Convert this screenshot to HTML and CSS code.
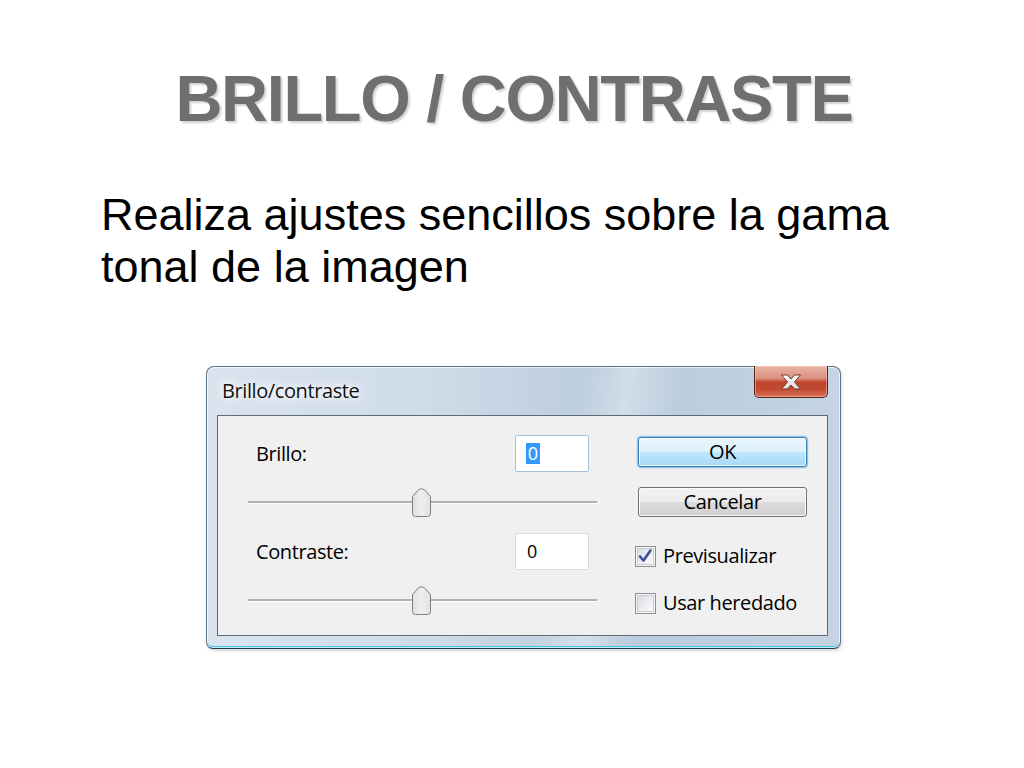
FILE: index.html
```html
<!DOCTYPE html>
<html lang="es">
<head>
<meta charset="utf-8">
<title>Brillo / Contraste</title>
<link rel="stylesheet" href="styles.css">
</head>
<body>
<main class="slide">
  <h1 class="slide-title">BRILLO / CONTRASTE</h1>
  <p class="slide-text">Realiza ajustes sencillos sobre la gama tonal de la imagen</p>
  <section class="window">
    <header class="titlebar">
      <span class="window-title">Brillo/contraste</span>
      <span class="close-btn">
        <svg width="22" height="16" viewBox="0 0 22 16">
          <defs>
            <linearGradient id="xg" x1="0" y1="0" x2="0" y2="1">
              <stop offset="0" stop-color="#ffffff"/>
              <stop offset="1" stop-color="#d9d9d9"/>
            </linearGradient>
          </defs>
          <path d="M1.5,1 H7.5 L11,5 L14.5,1 H20.5 L14.5,8 L20.5,15 H14.5 L11,11 L7.5,15 H1.5 L7.5,8 Z" fill="url(#xg)" stroke="#7a3426" stroke-width="1"/>
        </svg>
      </span>
    </header>
    <div class="client">
      <div class="controls">
        <div class="field-row">
          <span class="label">Brillo:</span>
          <span class="input focused"><span class="sel">0</span></span>
        </div>
        <div class="slider">
          <svg class="thumb" width="19" height="29" viewBox="0 0 19 29">
            <defs>
              <linearGradient id="tg" x1="0" y1="0" x2="1" y2="0">
                <stop offset="0" stop-color="#e0e0e0"/>
                <stop offset="0.5" stop-color="#efefef"/>
                <stop offset="1" stop-color="#e2e2e2"/>
              </linearGradient>
            </defs>
            <path d="M0.5,8.5 L6.5,1.8 Q9.5,-0.6 12.5,1.8 L18.5,8.5 V25.5 Q18.5,28.5 15.5,28.5 H3.5 Q0.5,28.5 0.5,25.5 Z" fill="url(#tg)" stroke="#7e7e7e"/>
          </svg>
        </div>
        <div class="field-row">
          <span class="label">Contraste:</span>
          <span class="input"><span class="val">0</span></span>
        </div>
        <div class="slider">
          <svg class="thumb" width="19" height="29" viewBox="0 0 19 29">
            <path d="M0.5,8.5 L6.5,1.8 Q9.5,-0.6 12.5,1.8 L18.5,8.5 V25.5 Q18.5,28.5 15.5,28.5 H3.5 Q0.5,28.5 0.5,25.5 Z" fill="url(#tg)" stroke="#7e7e7e"/>
          </svg>
        </div>
      </div>
      <div class="actions">
        <span class="btn btn-default">OK</span>
        <span class="btn">Cancelar</span>
        <span class="check first">
          <span class="box">
            <svg width="19" height="19" viewBox="0 0 19 19">
              <path d="M4,9.5 L7.5,13.5 L14.5,3.5" fill="none" stroke="#3d4f9f" stroke-width="2.6" stroke-linecap="round" stroke-linejoin="round"/>
            </svg>
          </span>
          <span class="check-label">Previsualizar</span>
        </span>
        <span class="check">
          <span class="box"></span>
          <span class="check-label">Usar heredado</span>
        </span>
      </div>
    </div>
  </section>
</main>
</body>
</html>
```

FILE: styles.css
```css
html, body {
  margin: 0;
  padding: 0;
  background: #ffffff;
}

.slide {
  width: 1024px;
  height: 768px;
  overflow: hidden;
  display: flex;
  flex-direction: column;
}

.slide-title {
  margin: 67px 0 0 0;
  padding-left: 4px;
  font-family: "Liberation Sans", Arial, sans-serif;
  font-weight: bold;
  font-size: 65px;
  line-height: 64px;
  letter-spacing: -1.3px;
  color: #6f6f6f;
  text-align: center;
  text-shadow: 2px 2px 2px rgba(0, 0, 0, 0.18);
}

.slide-text {
  margin: 58px 0 0 101px;
  max-width: 850px;
  font-family: "Liberation Sans", Arial, sans-serif;
  font-size: 45px;
  line-height: 52px;
  color: #000000;
}

/* ---------- window ---------- */
.window {
  margin: 73px 0 0 206px;
  width: 635px;
  height: 283px;
  box-sizing: border-box;
  border: 1px solid #5e7385;
  border-bottom-color: #22394a;
  border-radius: 8px 8px 7px 7px;
  padding: 0 12px 0 10px;
  display: flex;
  flex-direction: column;
  background:
    linear-gradient(100deg, rgba(255,255,255,0) 55%, rgba(255,255,255,0.35) 62%, rgba(255,255,255,0) 70%),
    linear-gradient(to right, #d9e4ef 0%, #cfdbe8 35%, #b9cbdc 65%, #c4d4e3 100%);
  box-shadow:
    inset 0 0 0 1px rgba(255, 255, 255, 0.7),
    inset 0 -2px 0 #44c3ec,
    1px 2px 3px rgba(0, 0, 0, 0.15);
  font-family: "Open Sans", "Noto Sans", sans-serif;
  color: #000000;
}

.titlebar {
  height: 48px;
  display: flex;
  justify-content: space-between;
  align-items: flex-start;
}

.window-title {
  align-self: center;
  margin-left: 5px;
  font-size: 20px;
  letter-spacing: -0.4px;
  line-height: 26px;
  color: #111111;
  text-shadow: 0 0 6px #ffffff, 0 0 10px #ffffff, 0 0 14px rgba(255,255,255,0.9);
}

.close-btn {
  width: 74px;
  height: 32px;
  box-sizing: border-box;
  margin-top: -1px;
  border: 1px solid #5e2519;
  border-top: none;
  border-radius: 0 0 5px 5px;
  background: linear-gradient(to bottom, #e9b4a6 0%, #dc907e 40%, #c0432b 52%, #c24a31 75%, #d8735b 100%);
  box-shadow: inset 0 0 0 1px rgba(255, 210, 200, 0.45);
  display: flex;
  align-items: center;
  justify-content: center;
}

.client {
  flex: 1;
  margin-bottom: 12px;
  border: 1px solid #5d6b79;
  background: #f0f0f0;
  display: flex;
  gap: 41px;
  padding: 19px 0 0 30px;
}

.controls {
  width: 349px;
  display: flex;
  flex-direction: column;
  gap: 16px;
}

.field-row {
  height: 37px;
  display: flex;
  align-items: center;
  justify-content: space-between;
}

.label {
  padding-left: 8px;
  font-size: 20px;
  letter-spacing: -0.4px;
  line-height: 26px;
}

.input {
  width: 74px;
  height: 37px;
  margin-right: 8px;
  box-sizing: border-box;
  background: #ffffff;
  border: 1px solid #d7dde4;
  border-radius: 2px;
  display: flex;
  align-items: center;
}

.input.focused {
  border-color: #a3bfdc;
}

.sel {
  margin-left: 10px;
  width: 14px;
  height: 21px;
  background: #3399ff;
  color: #ffffff;
  font-size: 18px;
  line-height: 21px;
  text-align: center;
}

.val {
  margin-left: 11px;
  font-size: 18px;
  line-height: 21px;
}

.slider {
  height: 29px;
  display: flex;
  background: linear-gradient(to bottom,
    transparent 13px, #b1b1b1 13px, #b1b1b1 15px, #ffffff 15px, #ffffff 16px, transparent 16px);
}

.thumb {
  margin-left: 164px;
  display: block;
}

.actions {
  width: 169px;
  margin-top: 2px;
  display: flex;
  flex-direction: column;
}

.btn {
  height: 30px;
  box-sizing: border-box;
  border: 1px solid #707070;
  border-radius: 3px;
  background: linear-gradient(to bottom, #f3f3f3 0%, #ebebeb 50%, #dddddd 50%, #cfcfcf 100%);
  box-shadow: inset 0 0 0 1px #fbfbfb;
  font-size: 20px;
  letter-spacing: -0.4px;
  line-height: 27px;
  text-align: center;
  color: #000000;
}

.btn + .btn {
  margin-top: 20px;
}

.btn-default {
  border-color: #3c7fb1;
  background: linear-gradient(to bottom, #eaf6fd 0%, #d9f0fc 50%, #bee6fd 50%, #a7d9f5 100%);
  box-shadow: inset 0 0 0 1px rgba(255, 255, 255, 0.75), 0 0 0 1px rgba(90, 180, 235, 0.55), 0 0 3px rgba(60, 170, 235, 0.7);
}

.check {
  margin-left: -3px;
  height: 22px;
  display: flex;
  align-items: center;
  gap: 7px;
  margin-top: 25px;
}

.check.first {
  margin-top: 28px;
}

.box {
  width: 21px;
  height: 21px;
  box-sizing: border-box;
  border: 1px solid #8f8f8f;
  background: linear-gradient(135deg, #d3d7de 0%, #eef0f3 60%, #fcfcfc 100%);
  box-shadow: inset 0 0 0 1px #f6f6f6, inset 0 0 0 2px #c9ccd1;
  display: flex;
  align-items: center;
  justify-content: center;
}

.check-label {
  font-size: 20px;
  letter-spacing: -0.4px;
  line-height: 26px;
}
```
